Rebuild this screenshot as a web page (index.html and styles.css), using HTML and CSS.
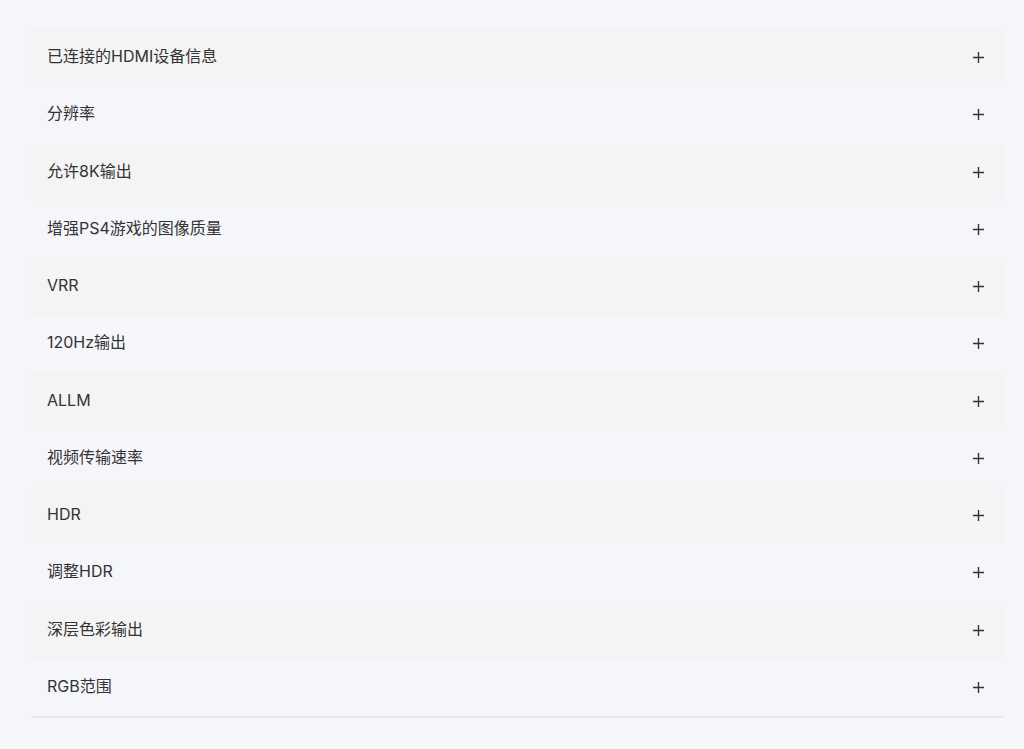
FILE: index.html
```html
<!DOCTYPE html>
<html lang="zh-CN">
<head>
<meta charset="utf-8">
<title>HDMI 设置</title>
<link rel="stylesheet" href="styles.css">
</head>
<body>
<div class="accordion">
  <div class="item"><span class="label">已连接的HDMI设备信息</span><svg class="plus" viewBox="0 0 11 11"><path d="M5.5 0V11M0 5.5H11"/></svg></div>
  <div class="item"><span class="label">分辨率</span><svg class="plus" viewBox="0 0 11 11"><path d="M5.5 0V11M0 5.5H11"/></svg></div>
  <div class="item"><span class="label">允许8K输出</span><svg class="plus" viewBox="0 0 11 11"><path d="M5.5 0V11M0 5.5H11"/></svg></div>
  <div class="item"><span class="label">增强PS4游戏的图像质量</span><svg class="plus" viewBox="0 0 11 11"><path d="M5.5 0V11M0 5.5H11"/></svg></div>
  <div class="item"><span class="label">VRR</span><svg class="plus" viewBox="0 0 11 11"><path d="M5.5 0V11M0 5.5H11"/></svg></div>
  <div class="item"><span class="label">120Hz输出</span><svg class="plus" viewBox="0 0 11 11"><path d="M5.5 0V11M0 5.5H11"/></svg></div>
  <div class="item"><span class="label">ALLM</span><svg class="plus" viewBox="0 0 11 11"><path d="M5.5 0V11M0 5.5H11"/></svg></div>
  <div class="item"><span class="label">视频传输速率</span><svg class="plus" viewBox="0 0 11 11"><path d="M5.5 0V11M0 5.5H11"/></svg></div>
  <div class="item"><span class="label">HDR</span><svg class="plus" viewBox="0 0 11 11"><path d="M5.5 0V11M0 5.5H11"/></svg></div>
  <div class="item"><span class="label">调整HDR</span><svg class="plus" viewBox="0 0 11 11"><path d="M5.5 0V11M0 5.5H11"/></svg></div>
  <div class="item"><span class="label">深层色彩输出</span><svg class="plus" viewBox="0 0 11 11"><path d="M5.5 0V11M0 5.5H11"/></svg></div>
  <div class="item"><span class="label">RGB范围</span><svg class="plus" viewBox="0 0 11 11"><path d="M5.5 0V11M0 5.5H11"/></svg></div>
</div>
</body>
</html>
```

FILE: styles.css
```css
html, body {
  margin: 0;
  padding: 0;
  background: #f5f6fa;
}
body {
  padding: 29px 21px 0 31px;
  font-family: Inter, "Noto Sans CJK SC", sans-serif;
  color: #333;
}
.accordion {
  display: flex;
  flex-direction: column;
  border-bottom: 2px solid #e7e8ec;
}
.item {
  height: 57.25px;
  display: flex;
  align-items: center;
  justify-content: space-between;
  padding: 0 19px 0 16px;
  box-sizing: border-box;
}
.item:nth-child(odd) {
  background: #f4f4f4;
}
.label {
  font-size: 16px;
  line-height: 20px;
  margin-bottom: 3px;
}
.plus {
  width: 11px;
  height: 11px;
  stroke: #333;
  stroke-width: 1.4;
  fill: none;
}
```
